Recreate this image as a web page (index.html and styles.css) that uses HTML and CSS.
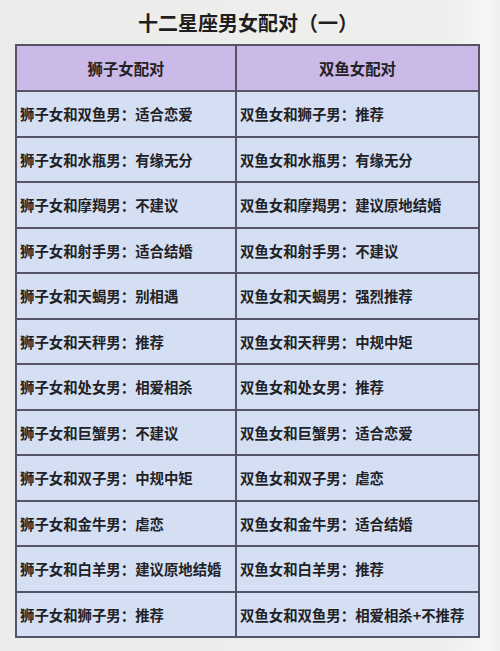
FILE: index.html
```html
<!DOCTYPE html>
<html lang="zh-CN">
<head>
<meta charset="utf-8">
<link rel="stylesheet" href="styles.css">
</head>
<body>
<div class="page">
  <h1 class="title">十二星座男女配对（一）</h1>
  <div class="grid">
    <div class="cell head">狮子女配对</div>
    <div class="cell head">双鱼女配对</div>
    <div class="cell">狮子女和双鱼男：适合恋爱</div>
    <div class="cell">双鱼女和狮子男：推荐</div>
    <div class="cell">狮子女和水瓶男：有缘无分</div>
    <div class="cell">双鱼女和水瓶男：有缘无分</div>
    <div class="cell">狮子女和摩羯男：不建议</div>
    <div class="cell">双鱼女和摩羯男：建议原地结婚</div>
    <div class="cell">狮子女和射手男：适合结婚</div>
    <div class="cell">双鱼女和射手男：不建议</div>
    <div class="cell">狮子女和天蝎男：别相遇</div>
    <div class="cell">双鱼女和天蝎男：强烈推荐</div>
    <div class="cell">狮子女和天秤男：推荐</div>
    <div class="cell">双鱼女和天秤男：中规中矩</div>
    <div class="cell">狮子女和处女男：相爱相杀</div>
    <div class="cell">双鱼女和处女男：推荐</div>
    <div class="cell">狮子女和巨蟹男：不建议</div>
    <div class="cell">双鱼女和巨蟹男：适合恋爱</div>
    <div class="cell">狮子女和双子男：中规中矩</div>
    <div class="cell">双鱼女和双子男：虐恋</div>
    <div class="cell">狮子女和金牛男：虐恋</div>
    <div class="cell">双鱼女和金牛男：适合结婚</div>
    <div class="cell">狮子女和白羊男：建议原地结婚</div>
    <div class="cell">双鱼女和白羊男：推荐</div>
    <div class="cell">狮子女和狮子男：推荐</div>
    <div class="cell">双鱼女和双鱼男：相爱相杀+不推荐</div>
  </div>
</div>
</body>
</html>
```

FILE: styles.css
```css
html, body {
  margin: 0;
  padding: 0;
}
body {
  width: 500px;
  height: 651px;
  overflow: hidden;
  background: linear-gradient(to right, #ebebe9 0%, #efefed 90%, #f6f6f5 97%, #f0f0ee 100%);
  font-family: "Noto Sans CJK SC", "Noto Sans", sans-serif;
  color: #222226;
}
.page {
  display: flex;
  flex-direction: column;
}
.title {
  margin: 0;
  height: 44px;
  line-height: 46px;
  text-align: center;
  font-size: 20px;
  font-weight: 700;
  color: #1e1e20;
  padding-right: 4px;
}
.grid {
  margin-left: 15px;
  width: 461px;
  height: 590px;
  padding: 2px;
  display: grid;
  grid-template-columns: 218px 241px;
  grid-template-rows: 44px repeat(12, 1fr);
  gap: 2px;
  background: #565468;
}
.cell {
  background: #d4dff4;
  display: flex;
  align-items: center;
  padding-left: 3px;
  font-size: 14.4px;
  font-weight: 700;
  white-space: nowrap;
}
.cell.head {
  background: #cbb9e7;
  justify-content: center;
  padding-left: 0;
  font-size: 15.4px;
}
```
